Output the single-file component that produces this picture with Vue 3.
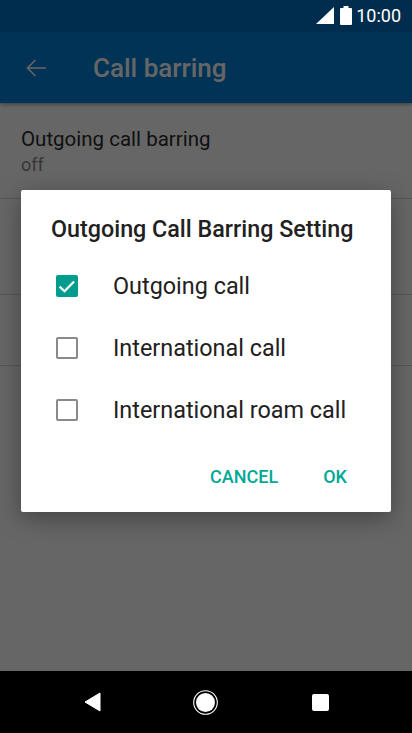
<template>
  <div class="phone">
    <div class="screen">
      <div class="status_bar"></div>
      <header class="app_bar">
        <svg class="back_icon" width="24" height="24" viewBox="0 0 24 24">
          <path d="M22 11.200H5.300l6.700-6.700L10.900 3.400 2.300 12l8.600 8.600 1.100-1.100-6.700-6.700H22z" fill="#fff" />
        </svg>
        <h1 class="app_title">Call barring</h1>
      </header>
      <ul class="settings">
        <li class="setting first">
          <div class="setting_name">Outgoing call barring</div>
          <div class="setting_value">off</div>
        </li>
        <li class="setting second"></li>
        <li class="setting third"></li>
      </ul>

      <div class="scrim">
        <div class="dialog">
          <h2 class="dialog_title">Outgoing Call Barring Setting</h2>
          <label v-for="option in options" :key="option.name" class="option">
            <span class="checkbox" :class="{ checked: option.checked }">
              <svg v-if="option.checked" width="22" height="22" viewBox="0 0 22 22">
                <path d="M3.600 11.600l4.900 4.600 9.600-9.800" fill="none" stroke="#fff" stroke-width="2.200" />
              </svg>
            </span>
            {{ option.name }}
          </label>
          <div class="actions">
            <span class="action">CANCEL</span>
            <span class="action">OK</span>
          </div>
        </div>
      </div>

      <div class="status_icons">
        <svg width="18" height="17" viewBox="0 0 18 17">
          <path d="M18 0v17H0z" fill="#fff" />
        </svg>
        <svg class="battery" width="12" height="19" viewBox="0 0 12 19">
          <path d="M3.500 0h5v2H11a1 1 0 0 1 1 1v15a1 1 0 0 1-1 1H1a1 1 0 0 1-1-1V3a1 1 0 0 1 1-1h2.500z" fill="#fff" />
        </svg>
        <span class="clock">10:00</span>
      </div>
    </div>

    <nav class="nav_bar">
      <svg width="17" height="20" viewBox="0 0 17 20">
        <path d="M16 1v18L1 10z" fill="#fff" stroke="#fff" stroke-linejoin="round" />
      </svg>
      <svg class="nav_home" width="25" height="25" viewBox="0 0 25 25">
        <circle cx="12.500" cy="12.500" r="11.800" fill="none" stroke="#fff" stroke-width="1.100" />
        <circle cx="12.500" cy="12.500" r="9.500" fill="#fff" />
      </svg>
      <span class="nav_square"></span>
    </nav>
  </div>
</template>

<script setup>
const options = [
  { name: "Outgoing call", checked: true },
  { name: "International call", checked: false },
  { name: "International roam call", checked: false },
];
</script>

<style>
body {
  margin: 0;
}
</style>

<style scoped>
.phone {
  width: 412px;
  height: 733px;
  display: flex;
  flex-direction: column;
  overflow: hidden;
  font-family: Roboto, "Liberation Sans", sans-serif;
}

.screen {
  position: relative;
  flex-grow: 1;
  background-color: #fff;
}

.status_bar {
  height: 32px;
  background-color: #0071c0;
}

.app_bar {
  height: 71px;
  display: flex;
  align-items: center;
  padding-left: 24px;
  background-color: #0080d4;
  box-shadow: 0 2px 3px rgba(0, 0, 0, 0.3);
}

.app_title {
  margin: 0 0 0 45px;
  font-size: 26px;
  font-weight: 500;
  color: #fff;
}

ul,
li {
  list-style: none;
  margin: 0;
  padding: 0;
}

.setting {
  border-bottom: 1px solid #d4d4d4;
  box-sizing: border-box;
}

.first {
  height: 96px;
  padding: 24px 21px 0;
}

.second {
  height: 96px;
}

.third {
  height: 71px;
}

.setting_name {
  font-size: 20.500px;
  line-height: 24px;
  color: #2b2b2b;
}

.setting_value {
  margin-top: 2px;
  font-size: 18px;
  line-height: 24px;
  color: #8a8a8a;
}

.scrim {
  position: absolute;
  inset: 0;
  background-color: rgba(0, 0, 0, 0.6);
}

.dialog {
  position: absolute;
  left: 21px;
  top: 190px;
  width: 370px;
  height: 322px;
  box-sizing: border-box;
  padding: 24px 35px 0;
  background-color: #fff;
  border-radius: 2px;
  box-shadow: 0 6px 24px rgba(0, 0, 0, 0.35);
}

.dialog_title {
  margin: 0 -10px 10px -5px;
  font-size: 23.300px;
  line-height: 31px;
  font-weight: 500;
  white-space: nowrap;
  color: #212121;
}

.option {
  height: 62px;
  display: flex;
  align-items: center;
  gap: 35px;
  font-size: 23.400px;
  white-space: nowrap;
  color: #212121;
}

.checkbox {
  width: 22px;
  height: 22px;
  box-sizing: border-box;
  flex-shrink: 0;
  border: 2.500px solid #8a8a8a;
  border-radius: 2px;
}

.checked {
  border: none;
  background-color: #009d8e;
}

.checked svg {
  display: block;
}

.actions {
  display: flex;
  justify-content: flex-end;
  gap: 45px;
  padding: 24px 9px 0 0;
}

.action {
  font-size: 18px;
  line-height: 24px;
  font-weight: 500;
  color: #00a896;
}

.status_icons {
  position: absolute;
  top: 5px;
  right: 11px;
  height: 21px;
  display: flex;
  align-items: center;
  color: #fff;
}

.battery {
  margin-left: 6px;
}

.clock {
  margin-left: 4px;
  font-size: 18px;
}

.nav_bar {
  height: 62px;
  flex-shrink: 0;
  display: flex;
  align-items: center;
  padding-left: 84px;
  background-color: #000;
}

.nav_home {
  margin: 0 94px 0 92px;
}

.nav_square {
  width: 17px;
  height: 17px;
  border-radius: 2px;
  background-color: #fff;
}
</style>
